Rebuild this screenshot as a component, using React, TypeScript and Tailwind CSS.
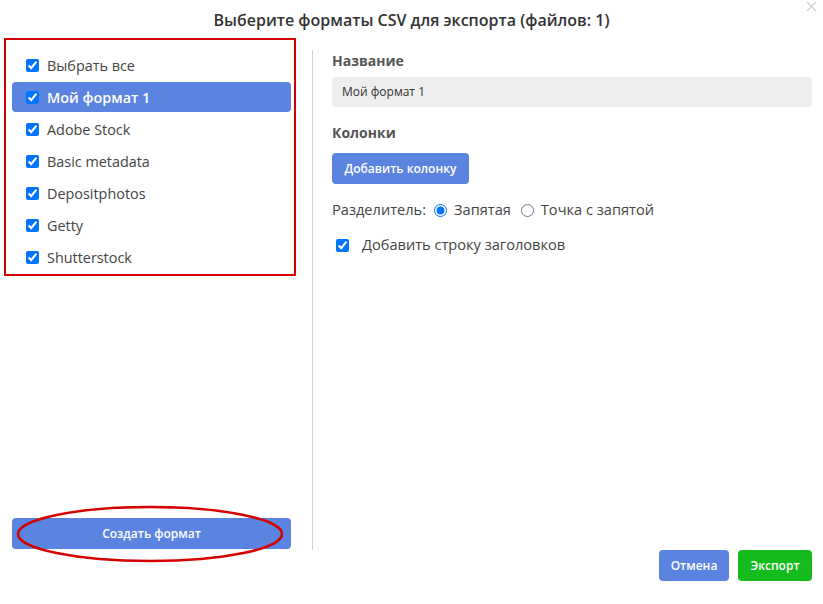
import React from "react";

const items = [
  "Выбрать все",
  "Мой формат 1",
  "Adobe Stock",
  "Basic metadata",
  "Depositphotos",
  "Getty",
  "Shutterstock",
];

export default function App() {
  return (
    <div
      className="relative w-[823px] h-[604px] bg-white text-[#444] overflow-hidden"
      style={{ fontFamily: '"Open Sans", "Noto Sans", sans-serif' }}
    >
      <svg className="absolute left-[806px] top-[1px]" width="11" height="11" viewBox="0 0 11 11">
        <path d="M1 1 L10 10 M10 1 L1 10" stroke="#cfcfcf" strokeWidth="1.3" fill="none" />
      </svg>
      <div className="h-[38px] flex items-center justify-center text-[16px] font-semibold text-[#333] pt-[1px]">
        Выберите форматы CSV для экспорта (файлов: 1)
      </div>
      <div className="flex h-[512px]">
        <div className="w-[312px] flex flex-col justify-between">
          <div className="relative pt-[12px] pl-[12px] pr-[21px]">
            <div className="absolute left-[4px] top-0 w-[292px] h-[238px] border-2 border-[#d40000] pointer-events-none" />
            {items.map((it, i) => (
              <div
                key={it}
                className={
                  "h-[30px] mb-[2px] flex items-center pl-[14px] gap-[8px] text-[14.4px] rounded-[4px] pt-[1px] " +
                  (i === 1 ? "bg-[#5b83e0] text-white font-semibold" : "text-[#444]")
                }
              >
                <input type="checkbox" defaultChecked className="w-[13px] h-[13px] m-0" />
                <span>{it}</span>
              </div>
            ))}
          </div>
          <div className="relative pl-[12px] pr-[21px] mb-[1px]">
            <div className="h-[31px] rounded-[4px] bg-[#5b83e0] text-white text-[12px] font-semibold flex items-center justify-center">
              Создать формат
            </div>
            <svg className="absolute left-[16px] top-[-13px]" width="268" height="58" viewBox="0 0 268 58">
              <ellipse cx="134" cy="29" rx="132" ry="27" fill="none" stroke="#d40000" strokeWidth="2.5" />
            </svg>
          </div>
        </div>
        <div className="w-px bg-[#d0d0d0] mt-[12px]" />
        <div className="flex-1 pl-[19px] pr-[11px] pt-[13px] flex flex-col">
          <div className="text-[14px] font-bold text-[#555] h-[20px] leading-[20px]">Название</div>
          <div className="mt-[6px] h-[30px] rounded-[4px] bg-[#eeeeee] flex items-center pl-[10px] text-[12px] text-[#333]">
            Мой формат 1
          </div>
          <div className="mt-[16px] text-[14px] font-bold text-[#555] h-[20px] leading-[20px]">Колонки</div>
          <div className="mt-[10px] w-[137px] h-[31px] rounded-[4px] bg-[#5b83e0] text-white text-[12px] font-semibold flex items-center justify-center">
            Добавить колонку
          </div>
          <div className="mt-[16px] flex items-center text-[14.6px] text-[#444] h-[20px]">
            <span>Разделитель:</span>
            <input type="radio" name="sep" defaultChecked className="ml-[8px] w-[13px] h-[13px] m-0" />
            <span className="ml-[7px]">Запятая</span>
            <input type="radio" name="sep" className="ml-[10px] w-[13px] h-[13px] m-0" />
            <span className="ml-[7px]">Точка с запятой</span>
          </div>
          <div className="mt-[15px] flex items-center text-[14.6px] text-[#444] h-[20px] pl-[4px]">
            <input type="checkbox" defaultChecked className="w-[13px] h-[13px] m-0" />
            <span className="ml-[13px]">Добавить строку заголовков</span>
          </div>
        </div>
      </div>
      <div className="flex justify-end gap-[9px] pr-[11px]">
        <div className="w-[70px] h-[31px] rounded-[4px] bg-[#5b83e0] text-white text-[12px] font-semibold flex items-center justify-center">
          Отмена
        </div>
        <div className="w-[74px] h-[31px] rounded-[4px] bg-[#14bb1c] text-white text-[12px] font-semibold flex items-center justify-center">
          Экспорт
        </div>
      </div>
    </div>
  );
}
